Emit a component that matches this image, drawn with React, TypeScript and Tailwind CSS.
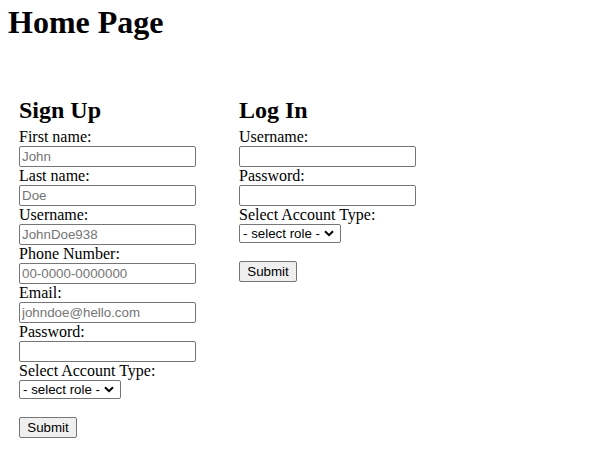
import React from "react";

const serif = "font-['Liberation_Serif','Times_New_Roman',serif]";
const sans = "font-['Liberation_Sans',Arial,sans-serif]";

function Field({ label, placeholder, type = "text" }: { label: string; placeholder?: string; type?: string }) {
  return (
    <>
      <label className="block h-[18px] leading-[18px] text-[16px] text-black">{label}</label>
      <input
        type={type}
        placeholder={placeholder}
        className={`block h-[21px] w-[177px] rounded-[2px] border border-[#767676] bg-white px-[2px] py-[1px] text-[13.33px] leading-[17px] text-black placeholder:text-[#757575] ${sans}`}
      />
    </>
  );
}

function RoleSelect() {
  return (
    <>
      <label className="block h-[18px] leading-[18px] text-[16px] text-black">Select Account Type:</label>
      <div className="relative h-[19px] w-[102px]">
        <select
          defaultValue=""
          className={`block h-[19px] w-[102px] appearance-none rounded-[2px] border border-[#767676] bg-white pl-[3px] pr-[18px] text-[13.33px] leading-[17px] text-black ${sans}`}
        >
          <option value="">- select role -</option>
          <option value="user">User</option>
          <option value="admin">Admin</option>
        </select>
        <svg
          className="pointer-events-none absolute right-[7px] top-[6px]"
          width="10"
          height="7"
          viewBox="0 0 10 7"
        >
          <path d="M1 1.2 L5 5.2 L9 1.2" fill="none" stroke="#000" strokeWidth="2" />
        </svg>
      </div>
      <button
        type="button"
        className={`mt-[18px] block h-[21px] w-[58px] rounded-[2px] border border-[#767676] bg-[#efefef] px-[6px] text-[13.33px] leading-[17px] text-black ${sans}`}
      >
        Submit
      </button>
    </>
  );
}

export default function App() {
  return (
    <div className={`min-h-[464px] w-[612px] bg-white text-black ${serif}`}>
      <h1 className="mt-[4px] ml-[8px] h-[37px] text-[32px] font-bold leading-[37px]">Home Page</h1>
      <div className="mt-[55px] flex pl-[19px]">
        <form className="w-[220px]" onSubmit={(e) => e.preventDefault()}>
          <h2 className="mb-[4px] h-[28px] text-[24px] font-bold leading-[28px]">Sign Up</h2>
          <Field label="First name:" placeholder="John" />
          <Field label="Last name:" placeholder="Doe" />
          <Field label="Username:" placeholder="JohnDoe938" />
          <Field label="Phone Number:" placeholder="00-0000-0000000" />
          <Field label="Email:" placeholder="johndoe@hello.com" />
          <Field label="Password:" type="password" />
          <RoleSelect />
        </form>
        <form className="w-[220px]" onSubmit={(e) => e.preventDefault()}>
          <h2 className="mb-[4px] h-[28px] text-[24px] font-bold leading-[28px]">Log In</h2>
          <Field label="Username:" />
          <Field label="Password:" type="password" />
          <RoleSelect />
        </form>
      </div>
    </div>
  );
}
